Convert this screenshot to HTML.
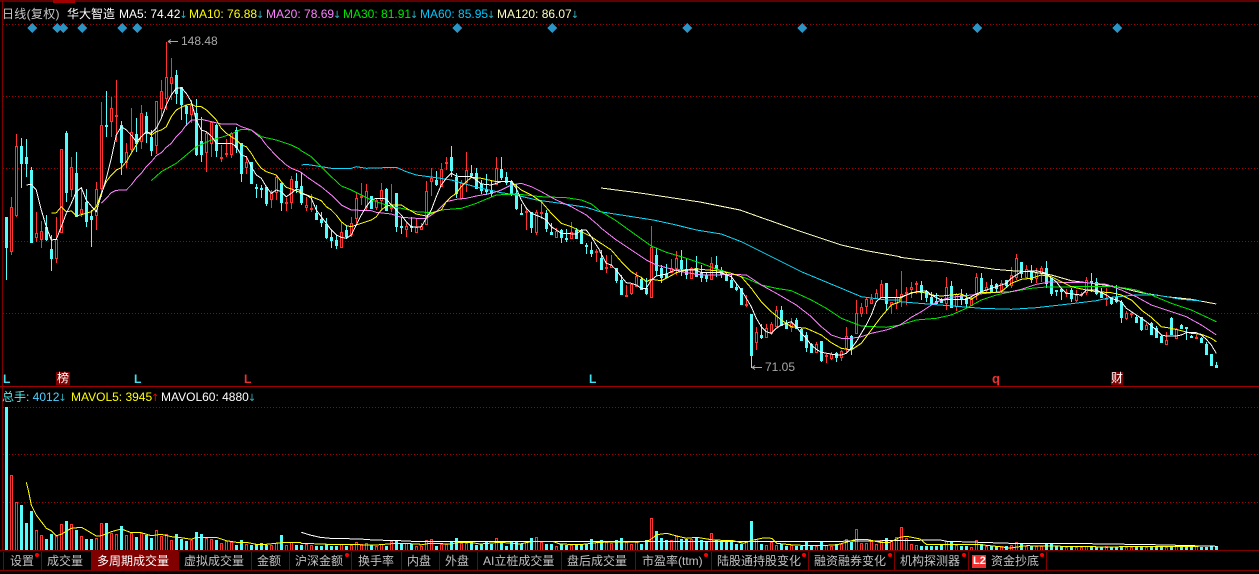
<!DOCTYPE html>
<html>
<head>
<meta charset="utf-8">
<style>
html,body{margin:0;padding:0;background:#000;}
#w{position:relative;width:1259px;height:574px;overflow:hidden;background:#000;font-family:"Liberation Sans","WenQuanYi Zen Hei","Noto Sans CJK SC",sans-serif;font-size:12px;}
#w svg{position:absolute;left:0;top:0;}
.t{position:absolute;white-space:nowrap;line-height:14px;height:14px;}
.a{font-family:"Liberation Sans",sans-serif;}
.t b{font-family:"DejaVu Sans",sans-serif;font-weight:normal;font-size:10px;color:#30b0c0;margin-left:-1px;}
.tab{position:absolute;top:554px;white-space:nowrap;line-height:14px;color:#c0c0c0;font-family:"Liberation Sans","WenQuanYi Zen Hei","Noto Sans CJK SC",sans-serif;}
.dot{position:absolute;top:553px;width:4px;height:4px;border-radius:2px;background:#f00;}
.sep{position:absolute;top:552px;width:1px;height:18px;background:#800000;}
.box{position:absolute;top:372px;height:13px;background:#800000;color:#fff;text-align:center;line-height:13px;}
</style>
</head>
<body>
<div id="w">
<svg id="s" width="1259" height="574" xmlns="http://www.w3.org/2000/svg">
<g shape-rendering="crispEdges">
<rect x="0" y="0" width="1259" height="2" fill="#600000"/>
<rect x="53" y="0" width="22" height="3" fill="#a00000"/>
<rect x="2" y="0" width="1" height="550" fill="#800000"/>
<rect x="0" y="386" width="1259" height="1" fill="#a00000"/>
<rect x="0" y="550" width="1259" height="1" fill="#800000"/>
<rect x="0" y="570" width="1259" height="1" fill="#800000"/>
<path d="M3 24.5H1259M3 96.5H1259M3 168.5H1259M3 241.5H1259M3 313.5H1259M3 407.5H1259M3 454.5H1259M3 502.5H1259" stroke="#a00000" stroke-width="1" stroke-dasharray="1 2" fill="none"/>
<path d="M32 23l5 5-5 5-5-5zM57 23l5 5-5 5-5-5zM63 23l5 5-5 5-5-5zM82 23l5 5-5 5-5-5zM122 23l5 5-5 5-5-5zM137 23l5 5-5 5-5-5zM457 23l5 5-5 5-5-5zM552 23l5 5-5 5-5-5zM687 23l5 5-5 5-5-5zM802 23l5 5-5 5-5-5zM977 23l5 5-5 5-5-5zM1117 23l5 5-5 5-5-5z" fill="#2a94c4"/>
<rect x="91" y="551" width="87" height="19" fill="#800000"/>
<rect x="972" y="555" width="14" height="13" fill="#f03030"/>
</g>
<g id="g" shape-rendering="crispEdges"></g>
<path d="M168 41.5H178M168 41.5l3-2M168 41.5l3 2M752 367.5H762M752 367.5l3-2M752 367.5l3 2" stroke="#aaa" fill="none"/>
</svg>

<span class="t" style="left:2px;top:7px;color:#c8c8c8;letter-spacing:.3px">日线(复权)</span>
<span class="t" style="left:67px;top:7px;color:#fff">华大智造</span>
<span class="t a" style="left:119px;top:7px;color:#fff">MA5: 74.42<b>↓</b></span>
<span class="t a" style="left:189px;top:7px;color:#ff0">MA10: 76.88<b>↓</b></span>
<span class="t a" style="left:266px;top:7px;color:#ff80ff">MA20: 78.69<b>↓</b></span>
<span class="t a" style="left:343px;top:7px;color:#00e600">MA30: 81.91<b>↓</b></span>
<span class="t a" style="left:420px;top:7px;color:#00c8ff">MA60: 85.95<b>↓</b></span>
<span class="t a" style="left:497px;top:7px;color:#ffffc0">MA120: 86.07<b>↓</b></span>

<span class="t a" style="left:181px;top:34px;color:#a8a8a8">148.48</span>
<span class="t a" style="left:765px;top:360px;color:#a8a8a8">71.05</span>

<span class="t a" style="left:3px;top:372px;color:#40e0f0;font-weight:bold">L</span>
<span class="box" style="left:56px;width:14px">榜</span>
<span class="t a" style="left:134px;top:372px;color:#40e0f0;font-weight:bold">L</span>
<span class="t a" style="left:244px;top:372px;color:#f03030;font-weight:bold">L</span>
<span class="t a" style="left:589px;top:372px;color:#40e0f0;font-weight:bold">L</span>
<span class="t a" style="left:992px;top:372px;color:#f03030;font-weight:bold;font-size:13px">q</span>
<span class="box" style="left:1111px;width:12px">财</span>

<span class="t" style="left:2px;top:390px;color:#50f0f0">总手: <span style="color:#50d0ff">4012</span><b>↓</b></span>
<span class="t a" style="left:71px;top:390px;color:#ff0">MAVOL5: 3945<b style="color:#f00">↑</b></span>
<span class="t a" style="left:161px;top:390px;color:#fff">MAVOL60: 4880<b>↓</b></span>

<i class="sep" style="left:3px"></i><i class="sep" style="left:41px"></i><i class="sep" style="left:91px"></i><i class="sep" style="left:178px"></i><i class="sep" style="left:251px"></i><i class="sep" style="left:289px"></i><i class="sep" style="left:351px"></i><i class="sep" style="left:401px"></i><i class="sep" style="left:439px"></i><i class="sep" style="left:477px"></i><i class="sep" style="left:561px"></i><i class="sep" style="left:635px"></i><i class="sep" style="left:711px"></i><i class="sep" style="left:808px"></i><i class="sep" style="left:894px"></i><i class="sep" style="left:968px"></i><i class="sep" style="left:1046px"></i>

<span class="tab" style="left:10px">设置</span><i class="dot" style="left:35px"></i>
<span class="tab" style="left:47px">成交量</span>
<span class="tab" style="left:97px;color:#fff">多周期成交量</span>
<span class="tab" style="left:184px">虚拟成交量</span>
<span class="tab" style="left:257px">金额</span>
<span class="tab" style="left:295px">沪深金额</span><i class="dot" style="left:345px"></i>
<span class="tab" style="left:358px">换手率</span>
<span class="tab" style="left:407px">内盘</span>
<span class="tab" style="left:445px">外盘</span>
<span class="tab" style="left:483px">AI立桩成交量</span>
<span class="tab" style="left:567px">盘后成交量</span>
<span class="tab" style="left:642px">市盈率(ttm)</span><i class="dot" style="left:704px"></i>
<span class="tab" style="left:717px">陆股通持股变化</span><i class="dot" style="left:802px"></i>
<span class="tab" style="left:814px">融资融券变化</span><i class="dot" style="left:888px"></i>
<span class="tab" style="left:900px">机构探测器</span><i class="dot" style="left:962px"></i>
<span class="tab a" style="left:973px;color:#fff;font-weight:bold;font-size:11px">L2</span>
<span class="tab" style="left:991px">资金抄底</span><i class="dot" style="left:1040px"></i>
</div>
<script>
(function(){
var segs=[
[30,"c560,560,650,750 r500,530,662,675 r312,348,555,562 c325,348,398,473 c327,380,398,440 c410,420,635,635 r545,610,620,635 r572,603,627,653 c555,590,628,633 c615,657,683,722 r562,628,683,698 r358,358,605,605 c303,310,485,515 r380,412,477,500 c366,430,558,560 r470,538,550,560 c478,515,572,590 c540,558,568,650 r455,478,556,600 r215,286,475,500 c183,285,288,320 r200,235,272,320 r150,255,257,335 c272,285,395,435 r338,367,395,415 r235,305,357,370 c265,312,340,365 r225,250,332,357 c245,258,308,340 c300,322,360,378 r212,212,345,372 r150,184,233,265 r35,140,205,240 r85,140,158,210 c120,135,190,222 c170,172,222,270 c225,227,248,288 r210,225,252,280 c208,250,372,378 c260,333,372,395 r305,308,365,425 r272,275,340,382 c282,285,360,380 r345,382,385,395 r328,370,372,382 r305,308,372,385 c290,300,352,368 c340,340,430,455 r378,395,410,432 c395,395,458,462 c462,470,475,505 c465,473,478,505 c470,472,520,527 r480,490,508,535 r435,440,487,510 c458,460,515,542 r505,516,520,542 r437,448,515,537 c430,453,470,490"],
[130,"c127,167,217,225 r200,225,232,243 r193,233,236,245 c225,250,267,267 c245,267,277,290 c265,282,322,328 c300,322,330,353 c315,330,345,357 r275,305,350,350 c285,300,317,328 r262,280,312,322 r190,203,263,280 r160,198,202,225 r163,183,232,240 c198,198,233,238 r205,210,232,240 r160,180,210,238 c175,177,240,243 r163,230,235,245 c190,190,287,307 c265,287,290,313 r280,288,296,320 c260,288,292,305 r265,290,305,305 r280,288,297,300 r153,183,283,285 r115,143,152,198 c123,150,163,168 r100,118,168,170 r82,97,99,120 c48,82,120,140 c130,140,190,205 r150,158,203,207 r67,120,155,185 c105,130,134,145 c115,130,173,178 c150,163,180,192 c133,178,183,195 c153,180,190,200 r82,115,163,165 c80,118,140,150 c125,140,157,165 c150,152,188,198 c163,188,235,240 c222,250,252,252 r232,243,247,300 c245,247,290,310 r240,247,305,315 r215,245,247,268 c240,248,295,305 c278,307,312,312 r295,302,320,322 c298,300,320,338 c298,325,327,335 r277,305,325,328 c295,300,323,322 c297,300,340,342 c340,345,347,372 c335,360,368,380 r358,362,365,395"],
[220,"c90,115,147,150 r105,140,143,160 r105,135,140,142 c143,145,180,190 c165,180,222,222 r195,225,228,232 r188,192,218,225 r155,168,197,198 c170,177,207,210 c175,205,220,225 r18,80,230,233 c85,105,150,168 c135,145,172,188 c132,162,172,175 r118,143,155,155 r93,115,143,165 c90,120,143,168 c115,148,162,177 r140,145,173,173 c108,145,168,172 c135,160,170,187 c155,165,175,187 r112,130,177,178 c108,135,145,170 c140,150,162,175 c155,165,180,182 c165,180,202,202 c190,202,208,213 c203,205,253,253 r225,253,255,262 c282,282,405,445 r322,337,365,390 c312,345,352,357 r312,325,350,352 r305,312,338,345 r258,270,318,320 c258,270,315,317 c300,310,323,325 r295,308,322,335 c295,300,325,325 c325,328,360,362 c335,345,380,395 c370,372,397,398 r365,372,395,397 c362,362,420,425 r403,405,407,430 r395,403,413,420 c395,400,412,427 r390,393,410,423 r322,348,385,395 c345,347,385,405 r240,280,338,340 r250,260,280,290 r232,238,258,282 r222,237,248,250 r208,220,235,237 r180,192,232,235 c190,190,250,270 r245,247,252,282 r208,232,250,268"],
[240,"r93,163,170,200 r140,155,160,195 r127,140,147,173 r123,128,130,162 c123,135,155,180 c150,152,172,185 c155,170,190,195 c160,182,190,195 c175,180,185,190 r110,142,190,210 c123,138,200,205 r160,163,198,213 c148,165,175,195 c160,173,190,205 r170,178,195,198 r100,110,160,180 c100,113,155,157 r125,140,150,155 c118,135,155,158 c128,132,145,158 r120,130,150,160 c120,120,135,145 r82,105,135,145 r42,55,110,120 c65,67,100,113 r75,88,110,113 c75,92,117,130 r85,100,115,130 r78,85,100,125 c63,85,130,145 c115,115,158,168 c150,150,153,168 c145,148,152,180 r148,155,158,170 c145,150,175,185 r150,165,180,185 r155,162,165,172 r112,120,155,165 c98,122,125,155 c113,125,160,165 c145,155,170,172 r145,175,178,198 c170,172,190,195 c135,172,183,190 c180,187,232,248 r212,218,235,240 r215,218,220,235 c225,232,245,248 c230,232,268,272 r250,255,268,270 c245,250,282,282 c257,265,292,293 c285,288,305,307 r275,300,312,312 c232,235,282,285 r265,268,295,298 c253,255,265,265 c260,262,263,300 c285,287,290,293 r285,290,293,298 c292,293,305,305 c305,312,342,345 c342,342,375,375 c367,375,380,380"]
];
var vols=[];
"22 225 307 315 370 333 390 405 417 402 408 372 363 372 390 408 417 417 415 370 369 398 402 378 405 398 411 398 405 414 390 408 402 420 402 417 423 420 396 402 415 417 420 430 423 426 435 420 432 435 432 429 435 435 430 405 435 426 435".split(" ").forEach(function(v){vols.push(Math.round(400+v/3));});
"92 90 92 95 95 90 95 97 90 95 92 85 90 88 92 95 90 95 80 80 90 88 90 95".split(" ").forEach(function(v){vols.push(Math.round(514+v/3));});
"95 78 75 95 90 90 82 72 88 88 85 92 90 82 90 72 88 95 85 82 90 85 72 70 85 90 90 97 90 93 93 93 93 90 75 82 78 85 88 78 72 85 90 85 90 78 12 52 72 78 78 65 75 75 75 70 78 85 57 78 85 85 80 90 90 82 22 75 90 92 85 92 90 95 93 97 97 85 95 97 85 93 95 90".split(" ").forEach(function(v){vols.push(Math.round(514+v/3));});
"90 75 85 45 87 87 80 90 78 72 82 70 40 72 90 93 97 95 95 95 90 82 85 93 97 97 98 78 90 95 97 97 97 97 93 85 90 95 95 95 95 90 90 97 95 100 100 100 100 95 95 100 100 97 100 100 95 100 100 100 97 100 100 100 97 100 100 97 100 100 95 97 100 100 95 97".split(" ").forEach(function(v){vols.push(Math.round(514+v/3));});
var rw="",cw="",rb="",rbi="",cb="",vr="",vri="",vc="",i=0;
segs.forEach(function(sg){
 var y0=sg[0];
 sg[1].split(" ").forEach(function(tk){
  var col=tk.charAt(0),p=tk.slice(1).split(",").map(function(v){return Math.round(y0+v/3);});
  var x=5+5*i,h=p[0],t=p[1],b=p[2],l=p[3];
  if(b<=t)b=t+1;
  if(l<b)l=b; if(h>t)h=t;
  var w="M"+(x+1)+" "+h+"h1V"+l+"h-1z";
  var bd="M"+x+" "+t+"h3V"+(b+1)+"h-3z";
  if(col=="r"){rw+=w;rb+=bd;if(b-t>1)rbi+="M"+(x+1)+" "+(t+1)+"h1V"+b+"h-1z";}
  else{cw+=w;cb+=bd;}
  var vt=vols[i]||548;
  var vb="M"+x+" "+vt+"h3V550h-3z";
  if(col=="r"){vr+=vb;if(550-vt>1)vri+="M"+(x+1)+" "+(vt+1)+"h1V550h-1z";}else vc+=vb;
  i++;
 });
});
function L(list){
 var o=[];
 list.forEach(function(s){
  var ox=s[0],oy=s[1];
  s[2].split(" ").forEach(function(q){var a=q.split(",");o.push((ox+a[0]/3).toFixed(1)+","+(oy+a[1]/3).toFixed(1));});
 });
 return o.join(" ");
}
var lines=[
["#ffffc0",[[0,0,"1803,564 1920,579 2100,606 2220,630 2304,660"],[600,220,"505,0 589,30 664,55 724,75 799,92 900,110"],[900,240,"0,52 64,60 130,65 209,77 284,88 334,92 394,95 454,105 514,122 574,130 649,140 724,158 799,170 874,178 949,192"]]],
["#10d8f8",[[300,130,"4,105 19,103 64,110 94,115 154,115 169,110 199,115 289,112 319,125 349,135 409,143 454,150 499,163 544,175 604,188 649,195 709,210 769,218 814,225 859,232 900,245"],[600,220,"160,0 229,15 289,30 364,42 424,65 484,95 544,125 604,155 664,180 724,205 784,230 859,240 900,240"],[900,240,"0,185 94,193 184,200 244,205 334,208 409,203 499,193 589,182 634,172 709,165 769,165 844,178 904,183"]]],
["#00e600",[[0,30,"454,452 484,425 529,400 559,375 589,350 634,330 664,322 694,312 724,298 754,300 784,320 829,330 874,345 900,358"],[300,130,"0,60 34,80 64,110 94,140 124,168 154,180 184,195 214,210 244,220 274,230 304,235 349,245 394,248 424,240 484,235 529,220 589,195 649,192 724,200 799,203 844,210 874,222 900,243"],[600,220,"45,0 94,35 154,78 199,97 244,110 304,130 349,147 394,160 439,175 484,195 529,205 574,212 634,240 679,265 724,295 784,318 859,322 900,315"],[900,240,"0,255 49,240 109,235 154,225 199,205 244,180 289,165 334,155 394,145 439,141 529,140 589,140 649,140 709,150 754,165 814,190 874,210 949,245"]]],
["#ff80ff",[[0,30,"304,520 319,505 334,488 349,481 379,480 394,465 409,445 424,430 439,410 454,395 469,377 484,368 499,352 514,340 529,320 544,305 559,285 574,270 604,268 634,275 664,282 709,282 724,290 754,300 784,325 799,345 829,378 859,405 874,415 900,425"],[300,130,"0,125 34,150 64,170 94,195 124,225 154,240 214,242 229,247 274,252 304,262 349,265 379,265 409,245 439,215 469,208 499,205 529,198 574,190 604,180 634,165 664,160 694,170 724,185 769,210 814,230 859,255 900,290"],[600,220,"0,22 49,60 94,90 139,120 169,135 214,147 244,155 304,165 349,165 394,163 439,165 484,195 529,220 589,255 634,290 664,320 694,345 724,355 754,355 784,350 814,340 859,330 900,315"],[900,240,"0,255 34,232 64,215 94,195 124,180 154,172 214,165 274,158 334,155 364,148 409,133 454,125 499,128 559,128 619,133 664,150 709,170 754,195 814,215 859,230 904,255 949,285"]]],
["#ffff00",[[0,30,"154,550 169,548 184,530 199,545 214,543 229,558 259,550 274,545 289,530 304,490 319,455 334,435 349,420 364,413 379,395 394,370 409,345 424,320 439,305 454,315 469,305 484,300 499,290 514,260 529,240 544,232 559,225 574,222 589,230 604,230 619,240 634,255 649,270 664,295 679,310 694,320 709,330 724,345 739,350 754,370 769,395 784,415 799,425 829,435 844,455 859,472 874,477 900,487"],[300,130,"0,187 34,200 64,212 79,230 94,240 109,255 124,275 139,287 154,290 184,280 214,270 229,260 244,240 259,228 274,225 304,225 319,235 334,243 349,252 379,258 394,250 424,240 439,215 454,200 469,190 484,170 499,155 514,142 544,145 589,155 634,155 664,180 694,195 724,215 754,250 784,280 814,290 844,305 874,320 900,338"],[600,220,"0,68 34,90 64,125 94,155 109,165 124,172 139,185 154,178 184,182 199,175 229,158 259,150 289,147 349,152 394,160 424,170 454,205 484,245 514,275 544,300 574,320 619,325 664,345 694,368 724,385 754,390 784,370 814,330 844,290 874,255 900,245"],[900,240,"0,175 34,158 64,155 94,165 124,168 154,165 184,162 214,178 244,158 274,158 304,155 334,130 364,118 394,115 424,105 454,110 484,125 514,140 559,150 589,155 634,158 664,165 694,180 724,210 754,232 784,260 814,265 844,272 874,280 904,283 934,295 949,305"]]],
["#ffffff",[[0,30,"79,465 94,463 109,480 124,540 139,590 154,630 169,628 184,590 199,550 214,520 229,485 244,473 259,510 274,528 289,545 304,495 319,445 334,385 349,315 364,290 379,300 394,315 409,335 424,320 439,305 454,310 469,295 484,265 499,225 514,195 529,175 544,173 559,190 574,215 589,270 604,300 619,305 634,318 649,340 664,340 694,340 709,350 724,375 739,380 754,410 769,435 784,445 799,470 814,490 829,480 844,485 859,500 874,490 889,478 900,480"],[300,130,"0,190 19,195 34,205 49,240 64,260 79,280 94,300 109,315 124,322 139,325 154,315 169,285 184,255 199,230 214,210 229,205 244,205 259,207 274,225 289,240 304,255 319,275 334,290 349,292 364,290 379,265 394,240 409,200 424,165 439,145 454,130 469,138 484,140 514,140 529,150 544,162 574,165 589,160 604,155 634,155 649,175 664,210 679,235 694,250 724,262 739,270 754,290 769,300 784,310 829,312 844,300 859,300 874,320 889,345 900,362"],[600,220,"0,95 19,130 34,135 49,150 64,170 79,188 94,190 109,195 124,205 139,205 154,180 169,168 184,165 199,162 214,155 229,150 289,150 304,158 364,158 394,170 424,210 439,235 454,260 469,295 484,320 499,335 514,340 529,325 544,315 574,305 589,320 604,340 619,355 634,375 649,388 664,397 709,405 724,405 739,400 754,385 769,365 784,340 799,315 814,285 829,245 844,232 900,232"],[900,240,"0,172 19,165 49,155 79,152 94,165 124,180 154,178 199,178 214,170 229,162 244,155 289,140 319,130 334,115 364,95 409,92 439,100 454,115 469,125 484,145 499,160 544,165 559,150 589,150 619,165 634,175 664,185 679,205 709,225 739,245 769,270 784,285 799,288 829,288 844,285 859,278 889,278 904,285 919,298 934,315 949,340"]]],
["#ffffff",[[0,514,"904,55 930,63 960,70 990,73 1080,75 1120,78 1200,80 1259,83"],[420,514,"0,83 1259,82"],[840,514,"0,82 300,78 320,82 390,84 510,88 670,88 940,92 1130,97"]]],
["#ffff00",[[0,400,"79,247 85,270 94,315 109,345 139,385 154,392 169,407 184,403 214,385 244,382 259,390 289,408 304,407 334,395 364,387 394,398 424,398 454,407 484,403 514,410 544,413 574,418 589,412 649,412 679,422 709,427 739,427 769,433 799,433 844,428 900,427"],[0,514,"904,88 964,90 1009,92 1069,92 1129,93 1189,88 1259,90"],[420,514,"0,93 30,88 90,90 120,85 150,85 180,90 240,85 300,90 340,82 400,83 420,90 480,92 540,85 670,83 690,78 710,62 740,58 770,66 800,73 830,70 880,78 940,80 970,88 1000,78 1030,72 1055,73 1070,88 1120,93 1180,95 1250,93"],[840,514,"0,90 50,76 85,77 120,85 150,85 180,70 200,67 240,75 260,92 300,92 350,92 420,92 480,98 510,102 560,95 670,97 740,97 800,100 840,98 890,98 990,97 1075,97"]]]
];
var h="";
h+='<path fill="#ff3232" d="'+rw+rb+'"/><path fill="#000" d="'+rbi+'"/><path fill="#54fcfc" d="'+cw+cb+'"/>';
h+='<path fill="#ff3232" d="'+vr+'"/><path fill="#000" d="'+vri+'"/><path fill="#54fcfc" d="'+vc+'"/>';
lines.forEach(function(l){h+='<polyline fill="none" stroke="'+l[0]+'" stroke-width="1" points="'+L(l[1])+'"/>';});
document.getElementById("g").innerHTML=h;
})();
</script>
</body>
</html>
